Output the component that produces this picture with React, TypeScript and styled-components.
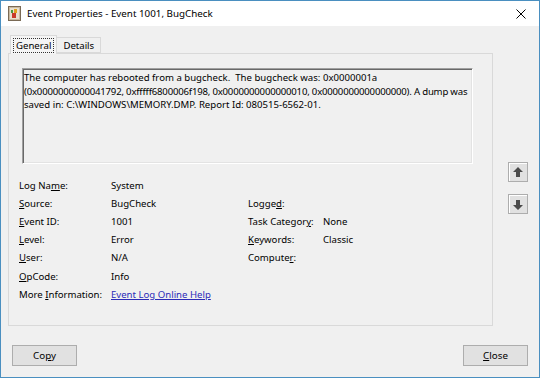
import { FC, ReactNode } from "react"
import styled, { createGlobalStyle } from "styled-components"

const GlobalStyle = createGlobalStyle`
  html, body {
    margin: 0;
    padding: 0;
    background: #f0f0f0;
  }
  body {
    font-family: "Noto Sans", "Open Sans", "Liberation Sans", sans-serif;
    font-size: 9.6px;
    color: #000;
  }
`

const Window = styled.div`
  width: 540px;
  height: 378px;
  box-sizing: border-box;
  border: 1px solid #4a8fc0;
  background: #f0f0f0;
  display: flex;
  flex-direction: column;
`

const TitleBar = styled.div`
  height: 25px;
  background: #fff;
  display: flex;
  align-items: center;
  padding: 0 13px 0 7px;
  gap: 6px;
`

const Title = styled.span`
  flex: 1;
  font-size: 9.8px;
  color: #000;
`

const Body = styled.div`
  flex: 1;
  display: flex;
  padding: 9px 0 0 7px;
`

const TabArea = styled.div`
  width: 485px;
  display: flex;
  flex-direction: column;
`

const TabRow = styled.div`
  display: flex;
  align-items: flex-end;
  height: 18px;
  padding-left: 2px;
  position: relative;
  z-index: 1;
`

const Tab = styled.div<{ active?: boolean }>`
  height: ${({ active }) => (active ? "19px" : "16px")};
  padding: 0 ${({ active }) => (active ? "2px" : "3px")};
  margin-bottom: ${({ active }) => (active ? "-1px" : "0")};
  border: 1px solid #d9d9d9;
  border-left: ${({ active }) => (active ? "1px solid #d9d9d9" : "none")};
  border-bottom: ${({ active }) => (active ? "none" : "1px solid #d9d9d9")};
  background: ${({ active }) => (active ? "#f5f5f5" : "#f0f0f0")};
  display: flex;
  align-items: center;
  box-sizing: border-box;
`

const TabLabel = styled.span<{ focused?: boolean }>`
  line-height: 13px;
  padding: 0 2px;
  border: 1px dotted ${({ focused }) => (focused ? "#333" : "transparent")};
`

const Panel = styled.div`
  height: 273px;
  box-sizing: border-box;
  border: 1px solid #d9d9d9;
  background: #f0f0f0;
  padding: 14px 19px 0 13px;
  display: flex;
  flex-direction: column;
`

const Description = styled.div`
  height: 96px;
  box-sizing: border-box;
  border-top: 1px solid #a0a0a0;
  border-left: 1px solid #a0a0a0;
  border-right: 1px solid #fff;
  border-bottom: 1px solid #fff;
  box-shadow: inset 1px 1px 0 #696969, inset -1px -1px 0 #e3e3e3;
  padding: 2px 1px 2px 1px;
  line-height: 13.5px;
  white-space: nowrap;
`

const DescLine = styled.div<{ tight?: boolean }>`
  letter-spacing: ${({ tight }) => (tight ? "-0.2px" : "0")};
`

const Fields = styled.div`
  display: grid;
  grid-template-columns: 92px 137px 75px auto;
  grid-auto-rows: 18.2px;
  align-items: center;
  margin-top: 12px;
  margin-left: -3px;
`

const Cell = styled.span<{ col: number; row: number }>`
  grid-column: ${({ col }) => col};
  grid-row: ${({ row }) => row};
  white-space: nowrap;
`

const Link = styled.a`
  color: #2b2bb8;
  text-decoration: underline;
  cursor: pointer;
`

const U = styled.span`
  text-decoration: underline;
`

const SideColumn = styled.div`
  display: flex;
  flex-direction: column;
  gap: 12px;
  padding: 127px 0 0 15px;
`

const ArrowButton = styled.button`
  width: 20px;
  height: 20px;
  padding: 0;
  box-sizing: border-box;
  border: 1px solid #adadad;
  background: #e1e1e1;
  display: flex;
  align-items: center;
  justify-content: center;
  box-shadow: inset 1px 1px 0 #fff;
`

const Footer = styled.div`
  height: 32px;
  display: flex;
  justify-content: space-between;
  padding: 0 11px 0 11px;
`

const Button = styled.button`
  width: 65px;
  height: 21px;
  box-sizing: border-box;
  border: 1px solid #adadad;
  background: #e1e1e1;
  font-family: inherit;
  font-size: 9.8px;
  color: #000;
  padding: 0;
`

const Arrow: FC<{ down?: boolean }> = ({ down }) => (
  <svg width="10" height="11" viewBox="0 0 10 11" style={{ transform: down ? "rotate(180deg)" : undefined }}>
    <path d="M5 0 L10 5 L7 5 L7 10 L3 10 L3 5 L0 5 Z" fill="#4a4a4a" />
  </svg>
)

const AppIcon: FC = () => (
  <svg width="13" height="15" viewBox="0 0 13 15">
    <rect x="0.5" y="0.5" width="12" height="14" fill="#c9b9a0" stroke="#7a6a55" />
    <rect x="2" y="2" width="9" height="11" fill="#e8e0d0" />
    <rect x="4" y="7" width="4" height="5" fill="#c83a2a" />
    <rect x="6" y="3" width="3" height="4" fill="#e0a020" />
    <rect x="3" y="4" width="2" height="3" fill="#4a9a40" />
  </svg>
)

const CloseIcon: FC = () => (
  <svg width="10" height="10" viewBox="0 0 10 10">
    <path d="M0.5 0.5 L9.5 9.5 M9.5 0.5 L0.5 9.5" stroke="#000" strokeWidth="1" />
  </svg>
)

type Field = { col: number; row: number; content: ReactNode }

const fields: Field[] = [
  { col: 1, row: 1, content: <>Log Na<U>m</U>e:</> },
  { col: 2, row: 1, content: "System" },
  { col: 1, row: 2, content: <><U>S</U>ource:</> },
  { col: 2, row: 2, content: "BugCheck" },
  { col: 3, row: 2, content: <>Logge<U>d</U>:</> },
  { col: 1, row: 3, content: <><U>E</U>vent ID:</> },
  { col: 2, row: 3, content: "1001" },
  { col: 3, row: 3, content: <>Task Categor<U>y</U>:</> },
  { col: 4, row: 3, content: "None" },
  { col: 1, row: 4, content: <><U>L</U>evel:</> },
  { col: 2, row: 4, content: "Error" },
  { col: 3, row: 4, content: <><U>K</U>eywords:</> },
  { col: 4, row: 4, content: "Classic" },
  { col: 1, row: 5, content: <><U>U</U>ser:</> },
  { col: 2, row: 5, content: "N/A" },
  { col: 3, row: 5, content: <>Compute<U>r</U>:</> },
  { col: 1, row: 6, content: <><U>O</U>pCode:</> },
  { col: 2, row: 6, content: "Info" },
  { col: 1, row: 7, content: <>More <U>I</U>nformation:</> },
  { col: 2, row: 7, content: <Link>Event Log Online Help</Link> },
]

const descriptionLines = [
  { text: "The computer has rebooted from a bugcheck.\u00a0 The bugcheck was: 0x0000001a" },
  {
    text: "(0x0000000000041792, 0xfffff6800006f198, 0x0000000000000010, 0x0000000000000000). A dump was",
    tight: true,
  },
  { text: "saved in: C:\\WINDOWS\\MEMORY.DMP. Report Id: 080515-6562-01." },
]

const App: FC = () => {
  return (
    <>
      <GlobalStyle />
      <Window>
        <TitleBar>
          <AppIcon />
          <Title>Event Properties - Event 1001, BugCheck</Title>
          <CloseIcon />
        </TitleBar>
        <Body>
          <TabArea>
            <TabRow>
              <Tab active>
                <TabLabel focused>General</TabLabel>
              </Tab>
              <Tab>
                <TabLabel>Details</TabLabel>
              </Tab>
            </TabRow>
            <Panel>
              <Description>
                {descriptionLines.map((line, i) => (
                  <DescLine key={i} tight={line.tight}>
                    {line.text}
                  </DescLine>
                ))}
              </Description>
              <Fields>
                {fields.map((f, i) => (
                  <Cell key={i} col={f.col} row={f.row}>
                    {f.content}
                  </Cell>
                ))}
              </Fields>
            </Panel>
          </TabArea>
          <SideColumn>
            <ArrowButton>
              <Arrow />
            </ArrowButton>
            <ArrowButton>
              <Arrow down />
            </ArrowButton>
          </SideColumn>
        </Body>
        <Footer>
          <Button>
            Co<U>p</U>y
          </Button>
          <Button>
            <U>C</U>lose
          </Button>
        </Footer>
      </Window>
    </>
  )
}

export default App
